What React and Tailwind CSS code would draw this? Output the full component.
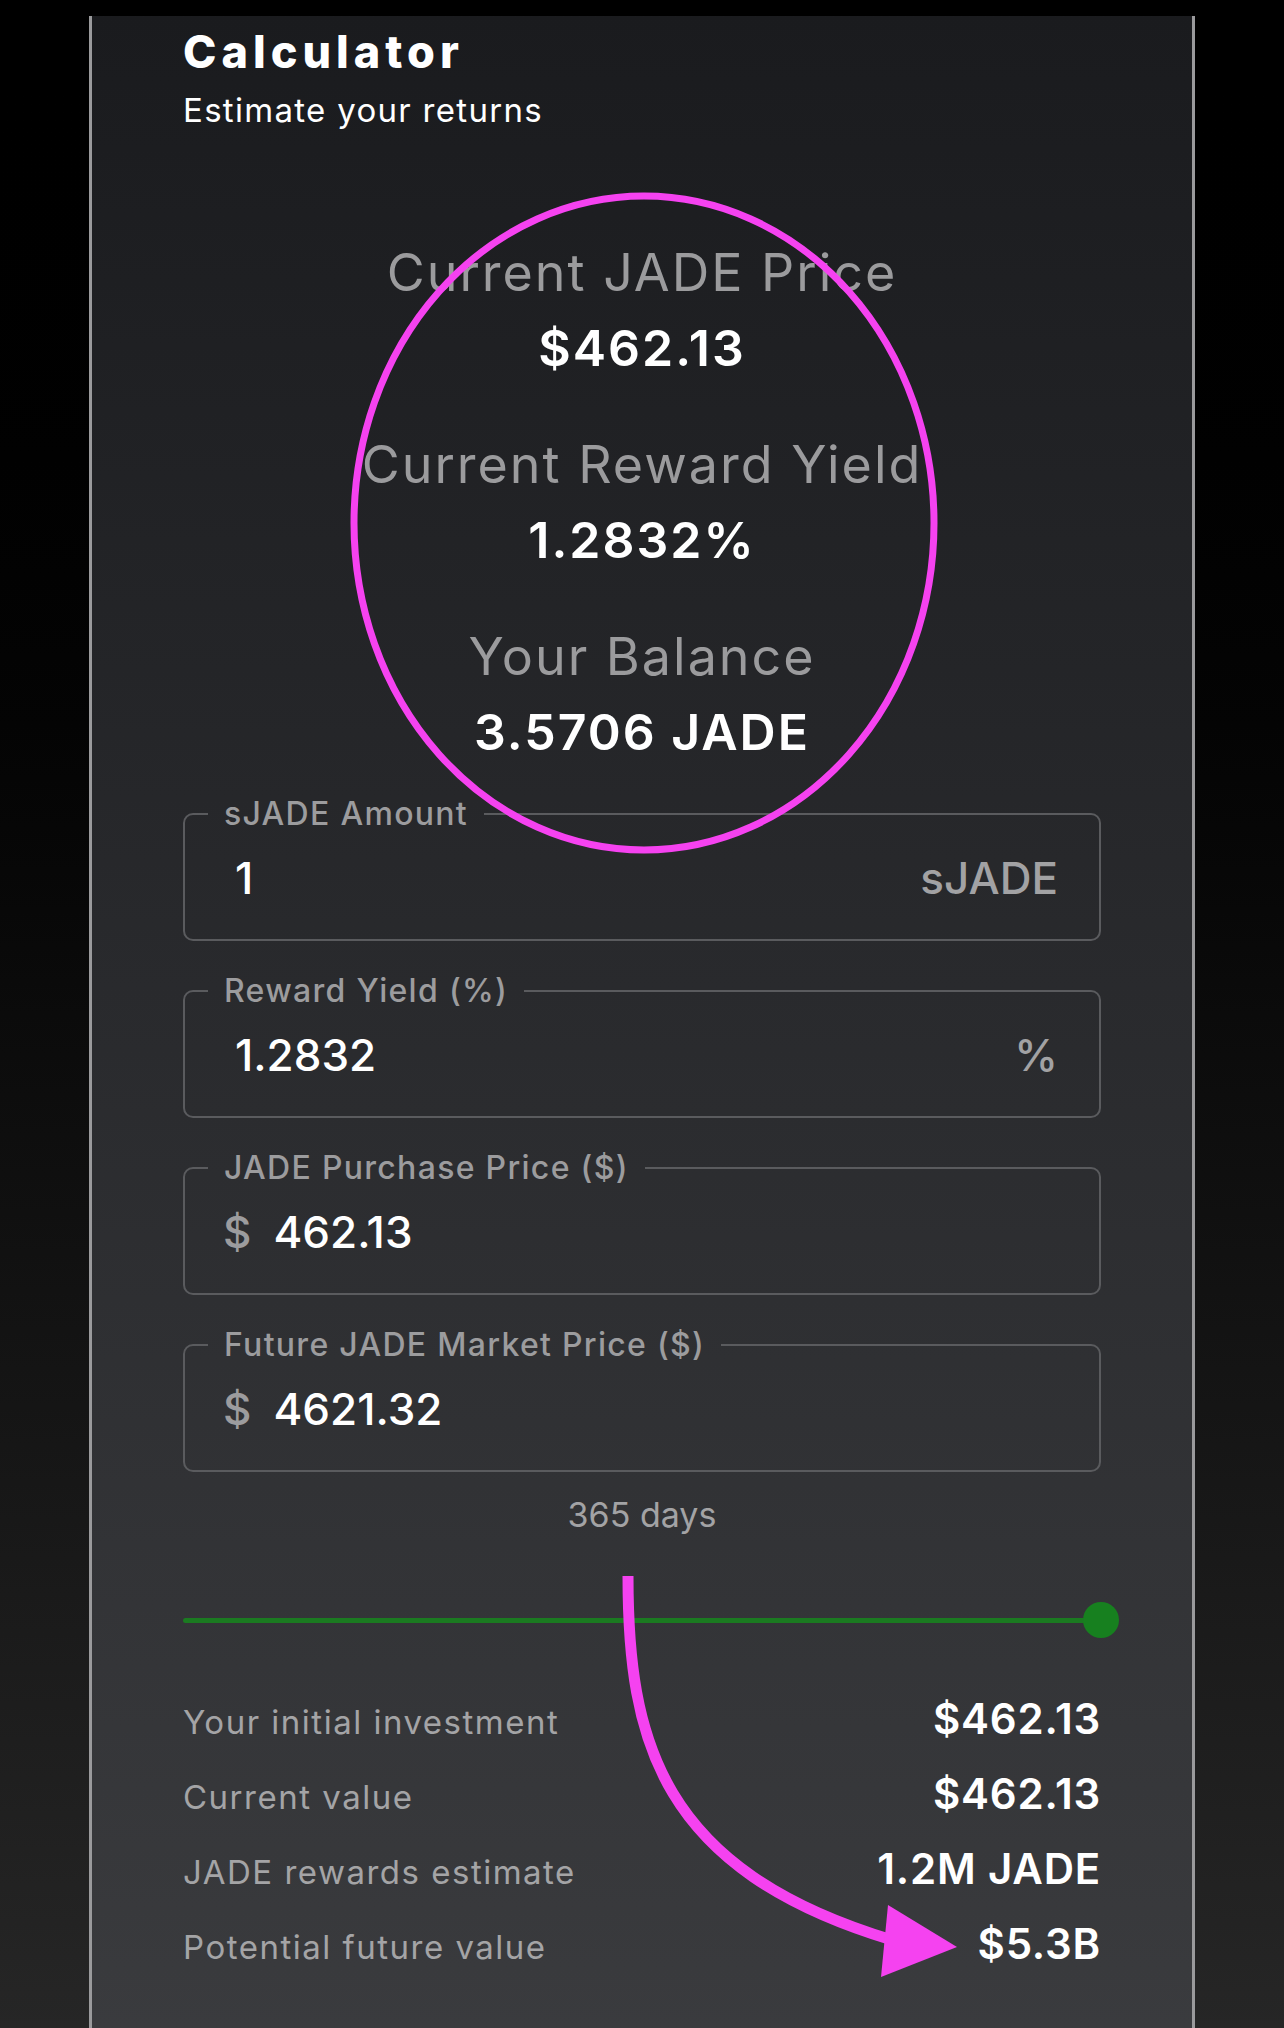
import React from 'react';

const stats = [
  { label: 'Current JADE Price', value: '$462.13' },
  { label: 'Current Reward Yield', value: '1.2832%' },
  { label: 'Your Balance', value: '3.5706 JADE' },
];

const results = [
  { label: 'Your initial investment', value: '$462.13' },
  { label: 'Current value', value: '$462.13' },
  { label: 'JADE rewards estimate', value: '1.2M JADE' },
  { label: 'Potential future value', value: '$5.3B' },
];

function Field({ label, value, prefix, suffix, className = '' }) {
  return (
    <fieldset className={`rounded-[10px] border-2 border-[#5a5b5e] ${className}`}>
      <legend className="ml-[23px] px-[16px] text-[32px] leading-[32px] font-medium tracking-[1.3px] text-[#9c9c9e]">
        {label}
      </legend>
      <div className={`flex items-center justify-between pt-[26px] pb-[39px] pr-[41px] ${prefix ? 'pl-[38px]' : 'pl-[50px]'}`}>
        <div className="flex items-center text-[44px] leading-[44px] font-medium">
          {prefix && <span className="mr-[22px] text-[#9c9c9e]">{prefix}</span>}
          <span className="text-white">{value}</span>
        </div>
        {suffix && <span className="text-[44px] leading-[44px] font-medium text-[#a2a2a4]">{suffix}</span>}
      </div>
    </fieldset>
  );
}

export default function App() {
  return (
    <div className="relative h-[2028px] overflow-hidden bg-linear-to-b from-black via-[#0b0b0b] to-[#262626] font-[family-name:Inter,sans-serif] antialiased">
      <div className="ml-[89px] mt-[16px] min-h-[2012px] w-[1106px] border-x-[3px] border-[#9a9a9c] bg-linear-to-b from-[#1a1b1e] to-[#3a3b3e] px-[91px] pt-[13px]">
        {/* Header */}
        <h1 className="text-[45px] leading-[45px] font-extrabold tracking-[5px] text-white">Calculator</h1>
        <p className="mt-[20px] text-[33px] leading-[33px] tracking-[1.3px] text-white">Estimate your returns</p>

        {/* Stats */}
        <div className="mt-[120px] flex flex-col items-center text-center">
          {stats.map((s, i) => (
            <div key={s.label} className={i > 0 ? 'mt-[66px]' : ''}>
              <div className="text-[52px] leading-[52px] tracking-[2px] text-[#9b9b9d]">{s.label}</div>
              <div className="mt-[24px] text-[50px] leading-[50px] font-semibold tracking-[2px] text-white">{s.value}</div>
            </div>
          ))}
        </div>

        {/* Inputs */}
        <Field className="mt-[41px]" label="sJADE Amount" value="1" suffix="sJADE" />
        <Field className="mt-[34px]" label="Reward Yield (%)" value="1.2832" suffix="%" />
        <Field className="mt-[34px]" label="JADE Purchase Price ($)" value="462.13" prefix="$" />
        <Field className="mt-[34px]" label="Future JADE Market Price ($)" value="4621.32" prefix="$" />

        {/* Days slider */}
        <div className="mt-[26px] text-center text-[34px] leading-[34px] text-[#a3a3a5]">365 days</div>
        <div className="mt-[70px] -mr-[18px] flex items-center">
          <div className="h-[5px] flex-1 rounded-full bg-[#1b7a21]" />
          <div className="-ml-[18px] h-[36px] w-[36px] rounded-full bg-[#17801f]" />
        </div>

        {/* Results */}
        <div className="mt-[43px]">
          {results.map((r) => (
            <div key={r.label} className="flex h-[75px] items-baseline justify-between leading-[75px]">
              <span className="text-[33px] tracking-[1.5px] text-[#a4a4a6]">{r.label}</span>
              <span className="text-[42px] font-semibold tracking-[0.8px] text-white">{r.value}</span>
            </div>
          ))}
        </div>
      </div>

      {/* Markup annotations */}
      <svg className="pointer-events-none absolute inset-0 h-full w-full" viewBox="0 0 1284 2028">
        <ellipse cx="644" cy="523" rx="290" ry="327" fill="none" stroke="#f542f0" strokeWidth="7" />
        <path d="M628 1576 C628 1740 660 1870 892 1940" fill="none" stroke="#f542f0" strokeWidth="11" />
        <polygon points="888,1905 881,1977 957,1947" fill="#f542f0" />
      </svg>
    </div>
  );
}
